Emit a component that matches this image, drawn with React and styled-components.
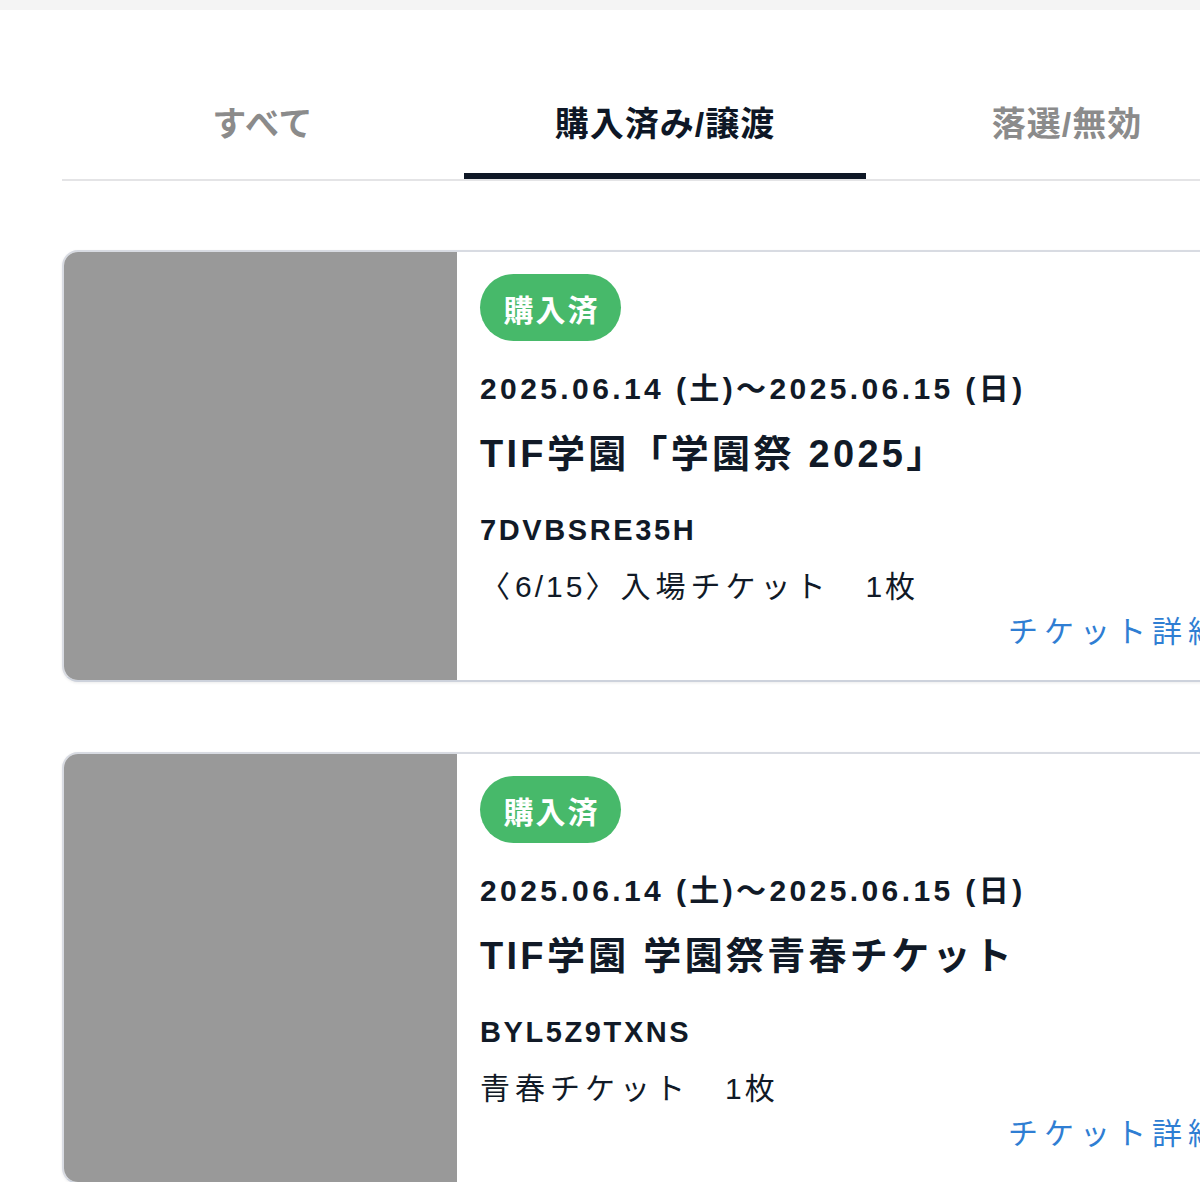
import React from 'react'
import styled, { createGlobalStyle } from 'styled-components'

const GlobalStyle = createGlobalStyle`
  html, body {
    margin: 0;
    padding: 0;
    background: #fff;
    overflow: hidden;
  }
  body {
    font-family: "Liberation Sans", "Noto Sans CJK JP", sans-serif;
    color: #111a27;
  }
`

const tabs = ['すべて', '購入済み/譲渡', '落選/無効']

const tickets = [
  {
    id: 1,
    status: '購入済',
    period: '2025.06.14 (土)〜2025.06.15 (日)',
    title: 'TIF学園「学園祭 2025」',
    code: '7DVBSRE35H',
    item: '〈6/15〉入場チケット　1枚',
  },
  {
    id: 2,
    status: '購入済',
    period: '2025.06.14 (土)〜2025.06.15 (日)',
    title: 'TIF学園 学園祭青春チケット',
    code: 'BYL5Z9TXNS',
    item: '青春チケット　1枚',
  },
]

// digits get tighter tracking than the kana/kanji around them
const splitDigits = text =>
  text.split(/([0-9/]+)/).map((part, i) =>
    /^[0-9/]+$/.test(part) ? <Num key={i}>{part}</Num> : part
  )

const App = () => {
  return (
    <>
      <GlobalStyle />
      <Page>
        <TopStrip />
        <Main>
          <TabBar>
            {tabs.map((t, i) => (
              <Tab key={t} active={i === 1}>{t}</Tab>
            ))}
          </TabBar>
          <List>
            {tickets.map(t => (
              <Card key={t.id}>
                <Thumb />
                <Body>
                  <Badge>{t.status}</Badge>
                  <Period>{t.period}</Period>
                  <Title>{t.title}</Title>
                  <Code>{t.code}</Code>
                  <Item>{splitDigits(t.item)}</Item>
                  <DetailLink href="#">チケット詳細</DetailLink>
                </Body>
              </Card>
            ))}
          </List>
        </Main>
      </Page>
    </>
  )
}

const Page = styled.div`
  width: 1330px;
  min-height: 1182px;
`

const TopStrip = styled.div`
  height: 10px;
  background: #f4f4f4;
`

const Main = styled.main`
  width: 1206px;
  margin: 0 auto;
  padding-top: 60px;
`

const TabBar = styled.nav`
  display: grid;
  grid-template-columns: repeat(3, 1fr);
  border-bottom: 2px solid #e4e4e6;
`

const Tab = styled.div`
  padding: 35px 0 30px;
  text-align: center;
  font-size: 34px;
  line-height: 38px;
  font-weight: 700;
  letter-spacing: 1px;
  color: ${p => (p.active ? '#0e1726' : '#8b8b8b')};
  border-bottom: 6px solid ${p => (p.active ? '#0e1726' : 'transparent')};
`

const List = styled.div`
  display: flex;
  flex-direction: column;
  gap: 70px;
  padding-top: 69px;
`

const Card = styled.article`
  display: flex;
  height: 432px;
  box-sizing: border-box;
  border: 2px solid #d8dbe2;
  border-bottom-color: #cdd2dc;
  border-radius: 16px;
  overflow: hidden;
  box-shadow: 0 1px 3px rgba(0, 0, 0, 0.08);
  background: #fff;
`

const Thumb = styled.div`
  width: 393px;
  flex-shrink: 0;
  background: #999999;
`

const Body = styled.div`
  flex: 1;
  display: flex;
  flex-direction: column;
  align-items: flex-start;
  padding: 22px 22px 0 23px;
`

const Badge = styled.span`
  display: inline-flex;
  align-items: center;
  justify-content: center;
  width: 141px;
  height: 67px;
  border-radius: 34px;
  background: #47b96a;
  color: #fff;
  font-size: 30px;
  font-weight: 700;
  letter-spacing: 2px;
  text-indent: 2px;
`

const Period = styled.div`
  margin-top: 28px;
  font-size: 30px;
  line-height: 40px;
  font-weight: 700;
  letter-spacing: 3.4px;
`

const Title = styled.h2`
  margin: 22px 0 0;
  font-size: 38px;
  line-height: 46px;
  font-weight: 700;
  letter-spacing: 3.3px;
`

const Code = styled.div`
  margin-top: 35px;
  font-size: 29px;
  line-height: 36px;
  font-weight: 700;
  letter-spacing: 2.6px;
`

const Item = styled.div`
  margin-top: 19px;
  font-size: 30px;
  line-height: 40px;
  letter-spacing: 5px;
`

const Num = styled.span`
  letter-spacing: 3px;
`

const DetailLink = styled.a`
  align-self: flex-end;
  margin-top: 5px;
  margin-right: 20px;
  font-size: 30px;
  line-height: 40px;
  letter-spacing: 6px;
  color: #2f7ed3;
  text-decoration: none;
`

export default App
